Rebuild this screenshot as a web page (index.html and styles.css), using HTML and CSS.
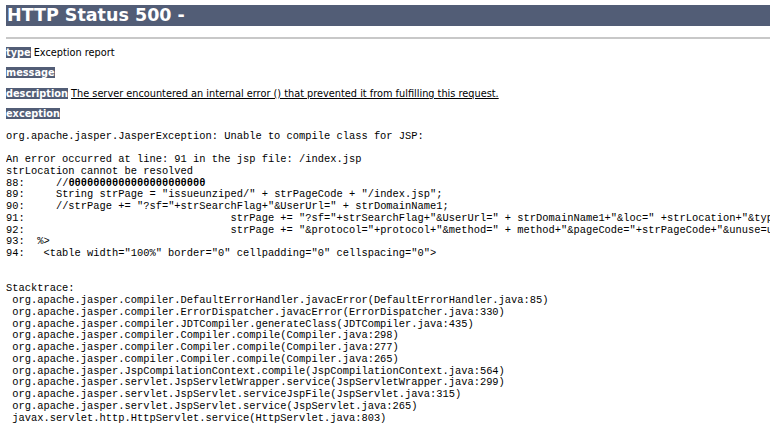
FILE: index.html
```html
<!DOCTYPE html>
<html lang="en">
<head>
    <meta charset="UTF-8">
    <title>Apache Tomcat - Error report</title>
    <link rel="stylesheet" href="styles.css">
</head>
<body>
    <h1>HTTP Status 500 - </h1>
    <hr class="rule">
    <p><b>type</b> Exception report</p>
    <p><b>message</b> <u></u></p>
    <p><b>description</b> <u>The server encountered an internal error () that prevented it from fulfilling this request.</u></p>
    <p><b>exception</b></p>
<pre class="trace">org.apache.jasper.JasperException: Unable to compile class for JSP:

An error occurred at line: 91 in the jsp file: /index.jsp
strLocation cannot be resolved
88: 	//<span class="garbled">θθθθθθθθθθθθθθθθθθθθθθ</span>
89: 	String strPage = "issueunziped/" + strPageCode + "/index.jsp";
90: 	//strPage += "?sf="+strSearchFlag+"&amp;UserUrl=" + strDomainName1;
91: 				    strPage += "?sf="+strSearchFlag+"&amp;UserUrl=" + strDomainName1+"&amp;loc=" +strLocation+"&amp;type="+strType;
92: 				    strPage += "&amp;protocol="+protocol+"&amp;method=" + method+"&amp;pageCode="+strPageCode+"&amp;unuse=unuse";
93:  %&gt;
94:   &lt;table width="100%" border="0" cellpadding="0" cellspacing="0"&gt;


Stacktrace:
 org.apache.jasper.compiler.DefaultErrorHandler.javacError(DefaultErrorHandler.java:85)
 org.apache.jasper.compiler.ErrorDispatcher.javacError(ErrorDispatcher.java:330)
 org.apache.jasper.compiler.JDTCompiler.generateClass(JDTCompiler.java:435)
 org.apache.jasper.compiler.Compiler.compile(Compiler.java:298)
 org.apache.jasper.compiler.Compiler.compile(Compiler.java:277)
 org.apache.jasper.compiler.Compiler.compile(Compiler.java:265)
 org.apache.jasper.JspCompilationContext.compile(JspCompilationContext.java:564)
 org.apache.jasper.servlet.JspServletWrapper.service(JspServletWrapper.java:299)
 org.apache.jasper.servlet.JspServlet.serviceJspFile(JspServlet.java:315)
 org.apache.jasper.servlet.JspServlet.service(JspServlet.java:265)
 javax.servlet.http.HttpServlet.service(HttpServlet.java:803)
</pre>
</body>
</html>
```

FILE: styles.css
```css
html {
    overflow: hidden;
    background: white;
}

body {
    margin: 5px 7px 0 6px;
    font-family: "DejaVu Sans", sans-serif;
    color: black;
}

h1 {
    margin: 0;
    height: 21px;
    padding-left: 1px;
    font-size: 17.5px;
    line-height: 21px;
    font-weight: bold;
    color: white;
    background-color: #525D76;
}

.rule {
    margin: 11px 0 0;
    height: 2px;
    border: none;
    background-color: #c8c8c8;
}

p {
    margin: 8.5px 0 0;
    font-size: 9.75px;
    line-height: 12px;
}

p:first-of-type {
    margin-top: 7.5px;
}

b {
    color: white;
    background-color: #525D76;
}

.trace {
    margin: 10.5px -7px 0 0;
    font-family: "Liberation Mono", "Courier New", monospace;
    font-size: 10.4px;
    line-height: 11.75px;
    tab-size: 8;
    white-space: pre;
    overflow: hidden;
}

.garbled {
    font-weight: bold;
}
```
